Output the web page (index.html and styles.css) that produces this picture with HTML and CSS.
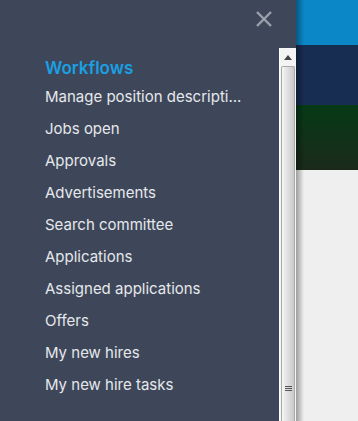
FILE: index.html
```html
<!DOCTYPE html>
<html lang="en">
	<head>
		<meta charset="UTF-8">
		<title>Workflows</title>
		<link rel="stylesheet" href="styles.css">
	</head>
	<body>
		<aside class="drawer">
			<div class="drawer-main">
				<div class="drawer-top">
					<svg class="close" width="18" height="18" viewBox="0 0 18 18" aria-hidden="true">
						<path d="M2 2 L16 16 M16 2 L2 16" stroke="#9aa1ac" stroke-width="2.4" fill="none"/>
					</svg>
				</div>
				<nav class="menu">
					<h2>Workflows</h2>
					<a href="#">Manage position descripti...</a>
					<a href="#">Jobs open</a>
					<a href="#">Approvals</a>
					<a href="#">Advertisements</a>
					<a href="#">Search committee</a>
					<a href="#">Applications</a>
					<a href="#">Assigned applications</a>
					<a href="#">Offers</a>
					<a href="#">My new hires</a>
					<a href="#">My new hire tasks</a>
				</nav>
			</div>
			<div class="scrollbar">
				<div class="scroll-up"><span></span></div>
				<div class="thumb">
					<div class="grip"><i></i><i></i><i></i></div>
				</div>
			</div>
		</aside>
		<main class="page">
			<div class="band-top"></div>
			<div class="band-nav"></div>
			<div class="band-green"></div>
			<div class="page-body"></div>
		</main>
	</body>
</html>
```

FILE: styles.css
```css
html, body {
	margin: 0;
	padding: 0;
	height: 100%;
}
body {
	display: flex;
	overflow: hidden;
	font-family: Inter, "Open Sans", Arial, sans-serif;
	background: #efefef;
}
.drawer {
	width: 296px;
	flex: none;
	display: flex;
	background: #3e4759;
}
.drawer-main {
	flex: 1;
}
.drawer-top {
	height: 48px;
	display: flex;
	justify-content: flex-end;
	align-items: flex-start;
}
.close {
	margin: 10px 6px 0 0;
}
.menu {
	padding-left: 45px;
}
.menu h2 {
	margin: 8px 0 1px;
	font-size: 17px;
	font-weight: 600;
	color: #1a9fe3;
	line-height: 24px;
}
.menu a {
	display: block;
	color: #e6e8ec;
	text-decoration: none;
	font-size: 15px;
	line-height: 32px;
}
.scrollbar {
	width: 16px;
	margin-top: 48px;
	border-left: 1px solid #ffffff;
	background: #f4f4f4;
	display: flex;
	flex-direction: column;
}
.scroll-up {
	height: 18px;
	display: flex;
	justify-content: center;
	align-items: center;
}
.scroll-up span {
	width: 0;
	height: 0;
	border-left: 4px solid transparent;
	border-right: 4px solid transparent;
	border-bottom: 5px solid #444;
}
.thumb {
	flex: 1;
	margin: 0 1px 0 1px;
	border: 1px solid #a9a9a9;
	border-bottom: none;
	border-radius: 2px 2px 0 0;
	background: linear-gradient(to right, #f6f6f6, #dcdcdc 55%, #c9c9c9);
	display: flex;
	flex-direction: column;
	justify-content: flex-end;
	align-items: center;
}
.grip {
	display: flex;
	flex-direction: column;
	gap: 1px;
	margin-bottom: 30px;
}
.grip i {
	display: block;
	width: 7px;
	height: 1px;
	background: #555;
}
.page {
	flex: 1;
	display: flex;
	flex-direction: column;
	position: relative;
}
.page::before {
	content: "";
	position: absolute;
	top: 0;
	bottom: 0;
	left: 0;
	width: 8px;
	background: linear-gradient(to right, rgba(0,0,0,0.35), rgba(0,0,0,0));
}
.band-top {
	height: 45px;
	background: #0b86c6;
}
.band-nav {
	height: 60px;
	background: #182d52;
}
.band-green {
	height: 65px;
	background: linear-gradient(#063a16, #1b2a1b);
}
.page-body {
	flex: 1;
	background: #efefef;
}
```
